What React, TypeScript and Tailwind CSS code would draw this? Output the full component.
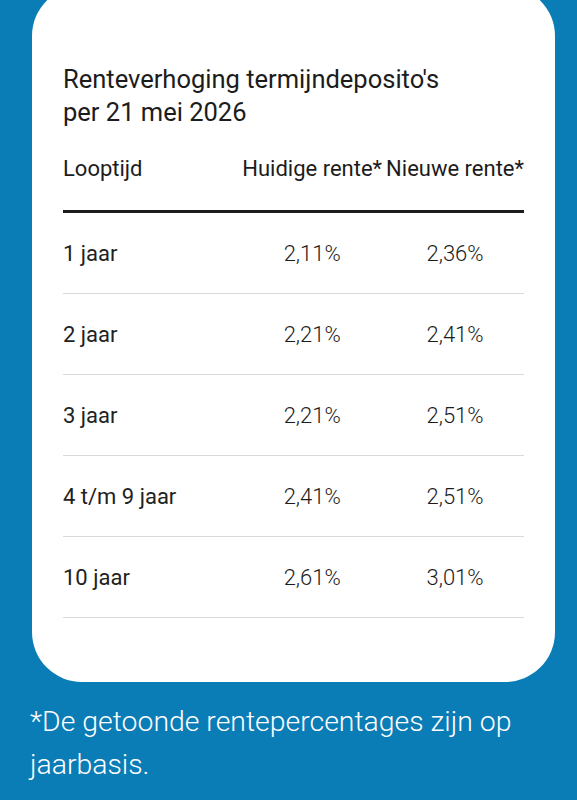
const rows = [
  { term: '1 jaar', current: '2,11%', next: '2,36%' },
  { term: '2 jaar', current: '2,21%', next: '2,41%' },
  { term: '3 jaar', current: '2,21%', next: '2,51%' },
  { term: '4 t/m 9 jaar', current: '2,41%', next: '2,51%' },
  { term: '10 jaar', current: '2,61%', next: '3,01%' },
];

export default function App() {
  return (
    <div
      className="min-h-screen w-[577px] overflow-hidden bg-[#0a7cb6]"
      style={{ fontFamily: 'Roboto, "Liberation Sans", sans-serif' }}
    >
      {/* Card */}
      <div className="-mt-[14px] ml-[32px] mr-[22px] rounded-[50px] bg-white px-[31px] pt-[77px] pb-[64px] text-[#1c1c1c]">
        <h2 className="text-[25.5px] leading-[33px] font-normal">
          Renteverhoging termijndeposito's
          <br />
          per 21 mei 2026
        </h2>

        <div className="grid grid-cols-[1fr_auto_auto] text-[22px]">
          {/* Header */}
          <div className="col-span-3 grid grid-cols-subgrid h-[84px] pb-[2px] items-center border-b-[3px] border-[#1c1c1c]">
            <div>Looptijd</div>
            <div className="text-center pr-[4px]">Huidige rente*</div>
            <div className="text-center">Nieuwe rente*</div>
          </div>

          {rows.map((r) => (
            <div
              key={r.term}
              className="col-span-3 grid grid-cols-subgrid h-[81px] items-center border-b border-[#dadada]"
            >
              <div className="text-[#222]">{r.term}</div>
              <div className="text-center pr-[4px] font-light">{r.current}</div>
              <div className="text-center font-light">{r.next}</div>
            </div>
          ))}
        </div>
      </div>

      {/* Footnote */}
      <p className="mt-[18px] pl-[30px] pr-[20px] text-[28.4px] leading-[43px] font-light text-white">
        *De getoonde rentepercentages zijn op jaarbasis.
      </p>
    </div>
  );
}
